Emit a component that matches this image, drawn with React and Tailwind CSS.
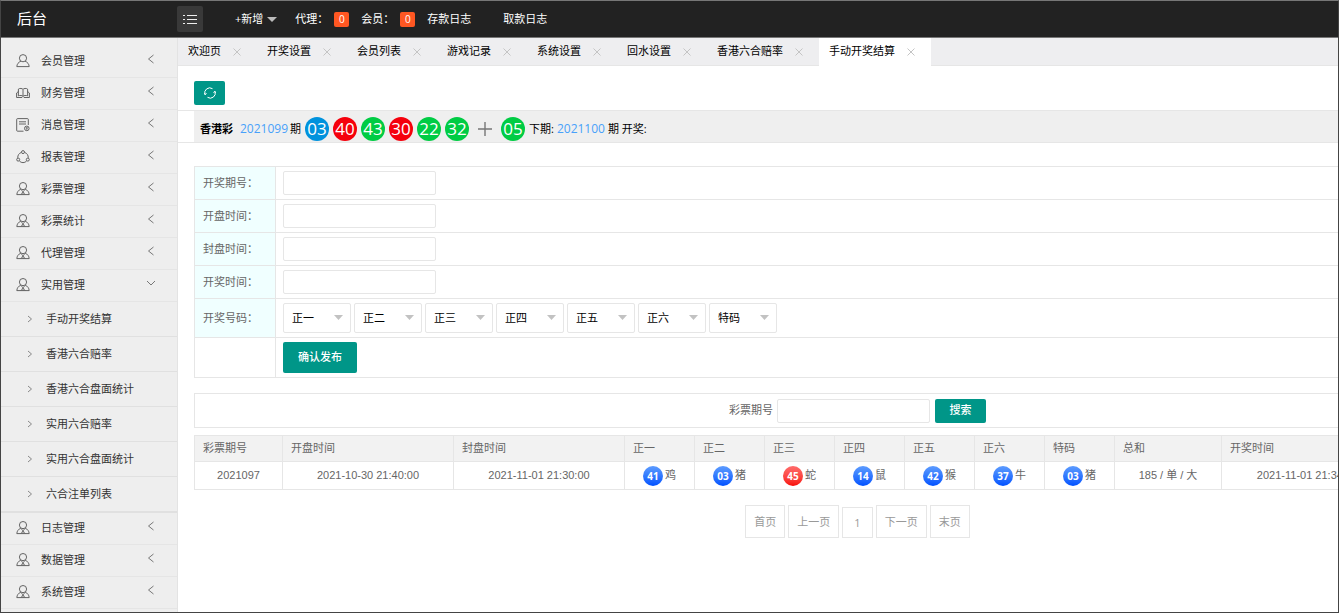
// src/App.jsx
import React, { useState } from 'react';

const menus = [
  { title: '会员管理', icon: 'user' },
  { title: '财务管理', icon: 'book' },
  { title: '消息管理', icon: 'form' },
  { title: '报表管理', icon: 'share' },
  { title: '彩票管理', icon: 'staff' },
  { title: '彩票统计', icon: 'staff' },
  { title: '代理管理', icon: 'staff' },
  {
    title: '实用管理',
    icon: 'staff',
    children: ['手动开奖结算', '香港六合赔率', '香港六合盘面统计', '实用六合赔率', '实用六合盘面统计', '六合注单列表'],
  },
  { title: '日志管理', icon: 'staff' },
  { title: '数据管理', icon: 'staff' },
  { title: '系统管理', icon: 'staff' },
];

const tabs = ['欢迎页', '开奖设置', '会员列表', '游戏记录', '系统设置', '回水设置', '香港六合赔率', '手动开奖结算'];

const lastDraw = [
  { num: '03', color: 'bg-[#0092dd]' },
  { num: '40', color: 'bg-[#f5000c]' },
  { num: '43', color: 'bg-[#00cc44]' },
  { num: '30', color: 'bg-[#f5000c]' },
  { num: '22', color: 'bg-[#00cc44]' },
  { num: '32', color: 'bg-[#00cc44]' },
];

const fields = ['开奖期号', '开盘时间', '封盘时间', '开奖时间'];
const positions = ['正一', '正二', '正三', '正四', '正五', '正六', '特码'];

const results = [
  {
    issue: '2021097',
    open: '2021-10-30 21:40:00',
    close: '2021-11-01 21:30:00',
    balls: [
      ['41', '鸡'],
      ['03', '猪'],
      ['45', '蛇', 'red'],
      ['14', '鼠'],
      ['42', '猴'],
      ['37', '牛'],
      ['03', '猪'],
    ],
    sum: '185 / 单 / 大',
    draw: '2021-11-01 21:34:00',
  },
];

const MenuIcon = ({ name }) => (
  <svg className="w-[14px] h-[14px] shrink-0" viewBox="0 0 14 14" fill="none" stroke="#555" strokeWidth="0.9" strokeLinejoin="round" aria-hidden="true">
    {name === 'user' && (
      <>
        <circle cx="7" cy="4.200" r="3.600" />
        <path d="M4.900 7.200C2.400 8.200 1 10 .8 12.600h12.400C13 10 11.600 8.200 9.100 7.200" />
      </>
    )}
    {name === 'staff' && (
      <>
        <circle cx="7" cy="4.100" r="3.600" />
        <path d="M4.800 7.100C2.400 8.300 1 10 .8 12.600h12.400c-.2-2.600-1.600-4.300-4-5.500" />
        <path d="M4.600 7.400 7 9.600l2.400-2.200M7 9.600l-2 3M7 9.600l2 3M7 9.600v3" strokeWidth="0.7" />
      </>
    )}
    {name === 'book' && (
      <path d="M7 3.500C6.500 2.300 3.600 2 2.400 3.100v6.800c1.400-.7 3.900-.6 4.600.6.700-1.200 3.200-1.300 4.600-.6V3.100C10.400 2 7.500 2.300 7 3.500v7M2.400 5.500.6 7v4.500h5.600M11.600 5.500 13.400 7v4.500H7.800" />
    )}
    {name === 'form' && (
      <>
        <path d="M12.300 7V1.400c0-.5-.3-.8-.8-.8h-10c-.5 0-.8.3-.8.8v11c0 .5.300.8.8.8h6M3 3.800h7M3 6h7" />
        <circle cx="10.800" cy="10.400" r="2.300" />
        <path d="M9.600 10h2.400M10.800 9v3" strokeWidth="0.7" />
      </>
    )}
    {name === 'share' && (
      <>
        <path d="M5.200 2.500C3 3.300 1.700 5.200 1.700 7.800M8.800 2.500c2.200.8 3.500 2.700 3.500 5.300M3.500 11.200c1.900 1.900 5.100 1.900 7 0" />
        <circle cx="7" cy="2.100" r="1.500" />
        <circle cx="2.200" cy="9.600" r="1.500" />
        <circle cx="11.800" cy="9.600" r="1.500" />
      </>
    )}
  </svg>
);

const Chevron = ({ open }) => (
  <svg className="w-[10px] h-[10px]" viewBox="0 0 10 10" fill="none" stroke="#777" strokeWidth="1" aria-hidden="true">
    {open ? <path d="M1 3l4 4 4-4" /> : <path d="M7.500 1L2.500 5l5 4" />}
  </svg>
);

const Header = () => (
  <header className="flex items-center h-[37px] bg-[#222] text-white text-[11px] border-b border-[#777]">
    <a href="#home" className="w-[176px] pl-4 pb-[2px] text-[15px]">后台</a>
    <button type="button" aria-label="菜单" className="flex items-center justify-center w-[26px] h-[26px] rounded-xs bg-[#393939]">
      <svg className="w-[14px] h-[14px]" viewBox="0 0 14 14" stroke="#eee" strokeWidth="1" aria-hidden="true">
        <path d="M4 3.500h10M4 7.500h10M4 11.500h10M0 3.500h2M0 7.500h2M0 11.500h2" />
      </svg>
    </button>
    <button type="button" className="flex items-center gap-1 ml-8">
      +新增
      <svg className="w-[10px] h-[5px]" viewBox="0 0 10 5" fill="#bbb" aria-hidden="true">
        <path d="M0 0h10L5 5z" />
      </svg>
    </button>
    <a href="#agent" className="flex items-center ml-[18px] gap-[6px]">
      代理：
      <span className="w-[15px] h-[15px] rounded-xs bg-[#ff5722] text-[10px] leading-[15px] text-center">0</span>
    </a>
    <a href="#member" className="flex items-center ml-3 gap-[6px]">
      会员：
      <span className="w-[15px] h-[15px] rounded-xs bg-[#ff5722] text-[10px] leading-[15px] text-center">0</span>
    </a>
    <a href="#deposit" className="ml-3">存款日志</a>
    <a href="#withdraw" className="ml-8">取款日志</a>
  </header>
);

const Sidebar = () => {
  const [opened, setOpened] = useState('实用管理');

  return (
    <nav className="w-[177px] shrink-0 pt-2 bg-[#eee] border-r border-[#e3e3e3] text-[11px] text-[#333]">
      {menus.map((item) => {
        const open = opened === item.title;
        return (
          <div key={item.title}>
            <button
              type="button"
              aria-expanded={open}
              onClick={() => setOpened(open ? '' : item.title)}
              className="flex items-center w-full h-8 pl-[15px] pr-[21px] border-b border-[#e5e5e5] text-left"
            >
              <span className="pb-[2px]"><MenuIcon name={item.icon} /></span>
              <span className="flex-1 pl-[11px]">{item.title}</span>
              <span className="pb-[6px]"><Chevron open={open} /></span>
            </button>
            {open && item.children && (
              <div className="border-b border-[#e0e0e0]">
                {item.children.map((child) => (
                  <a key={child} href="#page" className="flex items-center h-[35px] pl-[25px] border-b border-[#e0e0e0]">
                    <svg className="w-2 h-2" viewBox="0 0 8 8" fill="none" stroke="#888" strokeWidth="1" aria-hidden="true">
                      <path d="M2 1l3.500 3L2 7" />
                    </svg>
                    <span className="pl-3">{child}</span>
                  </a>
                ))}
              </div>
            )}
          </div>
        );
      })}
    </nav>
  );
};

const TabBar = () => {
  const [active, setActive] = useState('手动开奖结算');

  return (
    <div className="flex h-7 bg-[#eeeef0] border-b border-[#e6e6e6] text-[11px] text-black">
      {tabs.map((tab) => (
        <div key={tab} className={`flex items-center h-7 pl-[10px] pr-4 gap-3 ${active === tab ? 'bg-white' : ''}`}>
          <button type="button" className="pb-px" onClick={() => setActive(tab)}>{tab}</button>
          <button type="button" aria-label={`关闭${tab}`}>
            <svg className="w-2 h-2" viewBox="0 0 8 8" stroke="#c4c4c4" strokeWidth="1" aria-hidden="true">
              <path d="M.5.5l7 7M7.500.5l-7 7" />
            </svg>
          </button>
        </div>
      ))}
    </div>
  );
};

const DrawBall = ({ num, color }) => (
  <span className={`w-6 h-6 rounded-full text-white text-[17px] leading-6 text-center ${color}`}>{num}</span>
);

const DrawBar = () => (
  <div className="pl-4 border-y border-[#e6e6e6]">
    <div className="flex items-center h-[31px] pl-[6px] pt-[5px] bg-[#efefef] text-[11px] text-black">
      <strong>香港彩</strong>
      <span className="pl-[7px] pr-[2px] text-[12px] text-[#48a1fa]">2021099</span>
      <span>期</span>
      <div className="flex items-center gap-1 px-1">
        {lastDraw.map((ball) => (
          <DrawBall key={ball.num} {...ball} />
        ))}
        <svg className="w-6 h-6" viewBox="0 0 24 24" stroke="#777" strokeWidth="1.4" aria-hidden="true">
          <path d="M12 5v14M5 12h14" />
        </svg>
        <DrawBall num="05" color="bg-[#00cc44]" />
      </div>
      <span>下期:</span>
      <span className="px-[3px] text-[12px] text-[#48a1fa]">2021100</span>
      <span>期 开奖:</span>
    </div>
  </div>
);

const DrawForm = () => (
  <form onSubmit={(e) => e.preventDefault()}>
    <table className="w-full border-collapse text-[11px] text-[#666]">
      <tbody>
        {fields.map((field) => (
          <tr key={field}>
            <th scope="row" className="w-[81px] h-[33px] pl-2 border border-[#e6e6e6] bg-[#f0ffff] font-normal text-left">
              <label htmlFor={field}>{field}：</label>
            </th>
            <td className="pl-[7px] border border-[#e6e6e6]">
              <input id={field} type="text" className="block w-[153px] h-6 px-2 border border-[#e6e6e6] rounded-xs outline-none" />
            </td>
          </tr>
        ))}
        <tr>
          <th scope="row" className="h-[39px] pl-2 border border-[#e6e6e6] bg-[#f0ffff] font-normal text-left">开奖号码：</th>
          <td className="pl-[7px] border border-[#e6e6e6]">
            <div className="flex gap-[3px]">
              {positions.map((pos) => (
                <div key={pos} className="relative">
                  <select aria-label={pos} className="block appearance-none w-[68px] h-[30px] pl-2 border border-[#e6e6e6] rounded-xs bg-white text-black outline-none">
                    <option>{pos}</option>
                  </select>
                  <svg className="absolute right-2 top-3 w-[9px] h-[5px] pointer-events-none" viewBox="0 0 9 5" fill="#c2c2c2" aria-hidden="true">
                    <path d="M0 0h9L4.500 5z" />
                  </svg>
                </div>
              ))}
            </div>
          </td>
        </tr>
        <tr>
          <td className="h-10 border border-[#e6e6e6]"></td>
          <td className="pl-[7px] border border-[#e6e6e6]">
            <button type="submit" className="block w-[74px] h-[31px] rounded-xs bg-[#009688] text-white font-medium">确认发布</button>
          </td>
        </tr>
      </tbody>
    </table>
  </form>
);

const SearchBar = () => (
  <form onSubmit={(e) => e.preventDefault()} className="flex items-center justify-center h-[35px] mt-[15px] border border-[#e6e6e6] text-[11px] text-[#666]">
    <label htmlFor="issue">彩票期号</label>
    <input id="issue" type="text" className="w-[153px] h-6 ml-1 px-2 border border-[#e6e6e6] rounded-xs outline-none" />
    <button type="submit" className="w-[51px] h-6 ml-[5px] rounded-xs bg-[#009688] text-white font-medium">搜索</button>
  </form>
);

const ResultTable = () => (
  <table className="w-full mt-[7px] table-fixed border-collapse text-[11px] text-[#666]">
    <thead>
      <tr className="h-[26px] bg-[#f2f2f2] text-left">
        <th className="w-[88px] pl-2 border border-[#e6e6e6] font-normal">彩票期号</th>
        <th className="w-[171px] pl-2 border border-[#e6e6e6] font-normal">开盘时间</th>
        <th className="w-[171px] pl-2 border border-[#e6e6e6] font-normal">封盘时间</th>
        {positions.map((pos) => (
          <th key={pos} className="w-[70px] pl-2 border border-[#e6e6e6] font-normal">{pos}</th>
        ))}
        <th className="w-[107px] pl-2 border border-[#e6e6e6] font-normal">总和</th>
        <th className="w-[172px] pl-2 border border-[#e6e6e6] font-normal">开奖时间</th>
        <th className="border border-[#e6e6e6]"></th>
      </tr>
    </thead>
    <tbody className="font-['Liberation_Sans','Noto_Sans_CJK_SC',sans-serif] text-center">
      {results.map((row) => (
        <tr key={row.issue} className="h-7">
          <td className="border border-[#e6e6e6]">{row.issue}</td>
          <td className="border border-[#e6e6e6]">{row.open}</td>
          <td className="border border-[#e6e6e6]">{row.close}</td>
          {row.balls.map(([num, animal, color], i) => (
            <td key={i} className="border border-[#e6e6e6]">
              <div className="flex items-center justify-center gap-[2px]">
                <span
                  className={`w-5 h-5 rounded-full bg-linear-to-b text-white text-[10px] leading-5 font-bold font-['Open_Sans',sans-serif] ${
                    color === 'red' ? 'from-[#ff6a6a] to-[#f80000]' : 'from-[#5c9bff] to-[#0050ff]'
                  }`}
                >
                  {num}
                </span>
                {animal}
              </div>
            </td>
          ))}
          <td className="border border-[#e6e6e6]">{row.sum}</td>
          <td className="border border-[#e6e6e6]">{row.draw}</td>
          <td className="border border-[#e6e6e6]"></td>
        </tr>
      ))}
    </tbody>
  </table>
);

const Pagination = () => (
  <div className="flex items-end justify-center gap-[3px] mt-[15px] text-[11px] text-[#999]">
    <a href="#first" className="px-2 border border-[#e6e6e6] leading-[31px]">首页</a>
    <a href="#prev" className="px-2 border border-[#e6e6e6] leading-[31px]">上一页</a>
    <a href="#1" className="px-[11px] border border-[#e6e6e6] leading-[29px]">1</a>
    <a href="#next" className="px-2 border border-[#e6e6e6] leading-[31px]">下一页</a>
    <a href="#last" className="px-2 border border-[#e6e6e6] leading-[31px]">末页</a>
  </div>
);

const App = () => {
  return (
    <div className="flex flex-col min-h-screen bg-white border border-[#444] border-t-[#777] font-['Open_Sans','Noto_Sans_CJK_SC',sans-serif]">
      <Header />
      <div className="flex flex-1">
        <Sidebar />
        <main className="flex-1 min-w-0 overflow-hidden">
          <TabBar />
          <div className="pt-[15px] pl-4 pb-[5px]">
            <button type="button" aria-label="刷新" className="flex items-center justify-center w-[31px] h-6 rounded-xs bg-[#009688]">
              <svg className="w-3 h-3" viewBox="0 0 12 12" fill="none" stroke="#fff" strokeWidth="1" aria-hidden="true">
                <path d="M1 7.500A5 5 0 0 1 8.500 1.700M11 4.500A5 5 0 0 1 3.500 10.300M0 6l1 1.700L2.600 6.500M12 6l-1-1.700-1.600 1.200" />
              </svg>
            </button>
          </div>
          <DrawBar />
          {/* the results table is wider than the pane */}
          <div className="min-w-[1343px] pt-[23px] pl-4">
            <DrawForm />
            <SearchBar />
            <ResultTable />
            <Pagination />
          </div>
        </main>
      </div>
    </div>
  );
};

export default App;
